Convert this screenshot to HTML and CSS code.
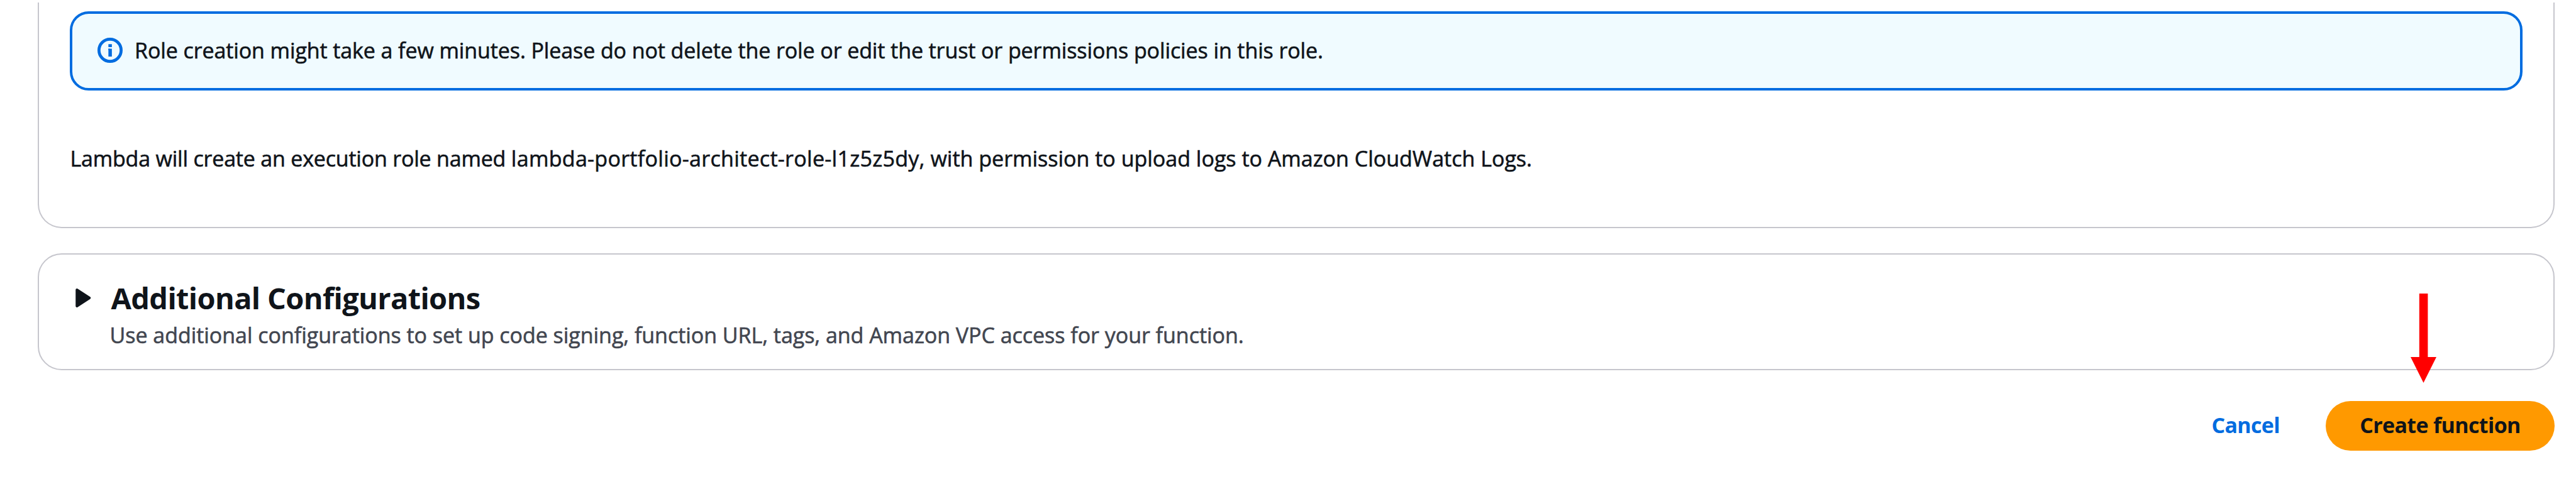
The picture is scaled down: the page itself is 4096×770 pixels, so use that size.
FILE: index.html
```html
<!DOCTYPE html>
<html lang="en">
<head>
<meta charset="utf-8">
<title>Create function</title>
<link rel="stylesheet" href="styles.css">
</head>
<body>
<main class="page">
  <section class="card role">
    <div class="alert">
      <svg class="info" viewBox="0 0 16 16" aria-hidden="true"><circle cx="8" cy="8" r="7.05" fill="none" stroke="currentColor" stroke-width="1.9"/><path d="M8.05 4.1v1.9M8.05 7v5" fill="none" stroke="currentColor" stroke-width="2.2"/><path d="M6.9 7.4h1" stroke="currentColor" stroke-width=".8"/></svg>
      <span class="alert-text">Role creation might take a few minutes. Please do not delete the role or edit the trust or permissions policies in this role.</span>
    </div>
    <p class="role-note"><span class="note-lead">Lambda will create an execution role named </span><span class="role-name">lambda-portfolio-architect-role-l1z5z5dy,</span> with permission to upload logs to Amazon CloudWatch Logs.</p>
  </section>
  <section class="card extra">
    <svg class="caret" viewBox="0 0 24 30" aria-hidden="true"><path d="M2 2L22 15L2 28z" fill="currentColor" stroke="currentColor" stroke-width="4" stroke-linejoin="round"/></svg>
    <div>
      <h2 class="title">Additional Configurations</h2>
      <p class="desc">Use additional configurations to set up code signing, function URL, tags, and Amazon VPC access for your function.</p>
    </div>
  </section>
  <footer class="actions">
    <a class="cancel">Cancel</a>
    <button class="primary">Create function</button>
    <svg class="arrow" viewBox="0 0 41 142" aria-hidden="true"><path d="M13.8 0H27.4V101H41L20.5 142L0 101H13.8z" fill="#f00"/></svg>
  </footer>
</main>
</body>
</html>
```
FILE: styles.css
```css
* { box-sizing: border-box; margin: 0; }
body { background: #fff; color: #0f141a; font: 400 34px/46px "Open Sans", "Noto Sans", sans-serif; }
.page { width: 4096px; height: 770px; padding: 4px 34px 0 60px; overflow: hidden; }
.card { border: 2px solid #c6c6cd; border-radius: 38px; }
.role { height: 359px; border-top: 0; border-radius: 0 0 38px 38px; padding: 14px 49px 0; }
.alert { display: flex; align-items: center; height: 126px; padding: 0 0 2px 40px; gap: 19px; border: 4px solid #006ce0; border-radius: 30px; background: #f0fbff; }
.info { width: 40px; height: 40px; color: #006ce0; }
.alert-text { letter-spacing: -0.1px; }
.alert-text, .role-note, .desc { white-space: nowrap; -webkit-text-stroke: 0.6px currentColor; }
.role-note { margin: 85px 0 0 0.5px; }
.note-lead { letter-spacing: -0.2px; }
.role-name { letter-spacing: 0.3px; }
.extra { display: flex; height: 186px; margin-top: 40px; padding: 39px 0 0 58px; }
.caret { width: 24.5px; height: 30px; margin: 15px 30px 0 0; }
.title { margin-left: 2px; font-size: 47px; line-height: 60px; letter-spacing: -0.67px; white-space: nowrap; }
.desc { margin-top: 6px; color: #424650; letter-spacing: -0.035px; }
.actions { position: relative; display: flex; justify-content: flex-end; align-items: center; height: 79px; margin-top: 49px; font-weight: 700; letter-spacing: -0.65px; }
.cancel { margin: 0 73px 4px 0; color: #006ce0; }
.primary { width: 364px; height: 79px; padding: 0 0 4px; border: 0; border-radius: 40px; background: #f90; color: #0f141a; font: inherit; letter-spacing: inherit; }
.arrow { position: absolute; right: 188px; top: -171px; width: 41px; height: 142px; }
```
